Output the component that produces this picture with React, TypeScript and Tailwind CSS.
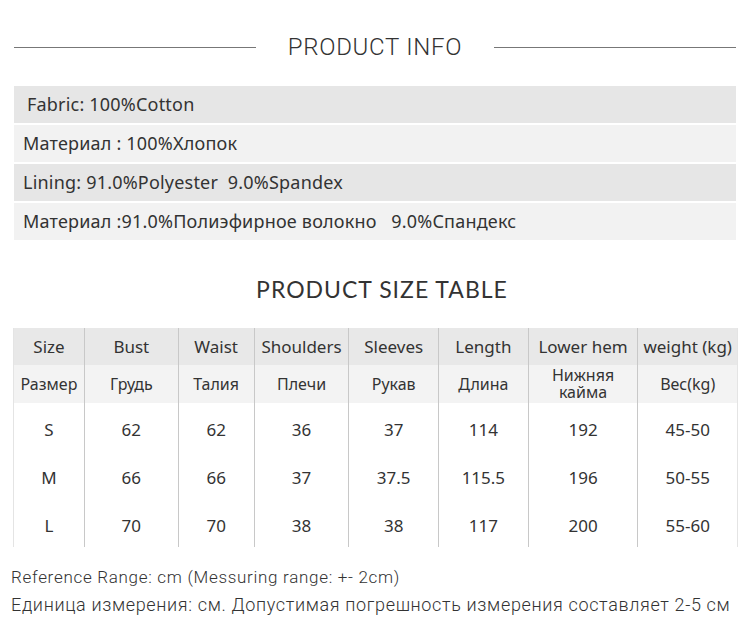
import React from 'react'

const infoRows = [
  { text: 'Fabric: 100%Cotton', dark: true, pad: 'pl-[13px]' },
  { text: 'Материал : 100%Хлопок', dark: false, pad: 'pl-[9px]' },
  { text: 'Lining: 91.0%Polyester  9.0%Spandex', dark: true, pad: 'pl-[9px]' },
  { text: 'Материал :91.0%Полиэфирное волокно   9.0%Спандекс', dark: false, pad: 'pl-[9px]' },
]

const cols = [
  { w: 'w-[70px]', en: 'Size', ru: 'Размер' },
  { w: 'w-[94px]', en: 'Bust', ru: 'Грудь' },
  { w: 'w-[76px]', en: 'Waist', ru: 'Талия' },
  { w: 'w-[95px]', en: 'Shoulders', ru: 'Плечи' },
  { w: 'w-[90px]', en: 'Sleeves', ru: 'Рукав' },
  { w: 'w-[90px]', en: 'Length', ru: 'Длина' },
  { w: 'w-[110px]', en: 'Lower hem', ru: 'Нижняя кайма' },
  { w: 'w-[100px]', en: 'weight (kg)', ru: 'Вес(kg)' },
]

const sizes = [
  ['S', '62', '62', '36', '37', '114', '192', '45-50'],
  ['M', '66', '66', '37', '37.5', '115.5', '196', '50-55'],
  ['L', '70', '70', '38', '38', '117', '200', '55-60'],
]

export default function App() {
  return (
    <div className="w-[750px] h-[642px] bg-white text-[#333] overflow-hidden">
      {/* Product info */}
      <div className="flex items-center pt-[31px] px-[14px]">
        <div className="flex-1 h-px bg-[#777]" />
        <h2 className="w-[238px] text-center text-[24px] font-light tracking-[0.7px] font-['Roboto',sans-serif] leading-[32px]">
          PRODUCT INFO
        </h2>
        <div className="flex-1 h-px bg-[#777]" />
      </div>

      <div className="mt-[23px] mx-[14px] flex flex-col gap-[2px] font-['Noto_Sans',sans-serif] text-[18px] tracking-[0.2px]">
        {infoRows.map((r) => (
          <div
            key={r.text}
            className={`h-[37px] flex items-center whitespace-pre ${r.pad} ${r.dark ? 'bg-[#e6e6e6]' : 'bg-[#f2f2f2]'}`}
          >
            {r.text}
          </div>
        ))}
      </div>

      {/* Size table */}
      <h2 className="mt-[33px] pl-[14px] text-center text-[23px] tracking-[1px] font-['Lato',sans-serif] leading-[32px]">
        PRODUCT SIZE TABLE
      </h2>

      <div className="mt-[23px] ml-[13px] w-[725px] flex border-l border-r border-[#e4e4e4] font-['Noto_Sans',sans-serif] text-[17px]">
        {cols.map((c, i) => (
          <div key={c.en} className={`${c.w} flex flex-col ${i > 0 ? 'border-l border-[#c8c8c8]' : ''}`}>
            <div className="h-[37px] bg-[#e8e8e8] flex items-center justify-center whitespace-nowrap">{c.en}</div>
            <div className="h-[38px] bg-[#f3f3f3] flex items-center justify-center text-center text-[16px] leading-[17px] px-[18px]">
              {c.ru}
            </div>
            {sizes.map((row) => (
              <div key={row[0]} className="h-[48px] flex items-center justify-center pt-[5px]">
                {row[i]}
              </div>
            ))}
          </div>
        ))}
      </div>

      {/* Notes */}
      <div className="mt-[18px] pl-[11px] font-['Roboto',sans-serif] font-light">
        <p className="text-[17px] leading-[24px] tracking-[0.7px]">Reference Range: cm (Messuring range: +- 2cm)</p>
        <p className="text-[18px] leading-[30px] mt-[1px] tracking-[0.65px]">
          Единица измерения: см. Допустимая погрешность измерения составляет 2-5 см
        </p>
      </div>
    </div>
  )
}
